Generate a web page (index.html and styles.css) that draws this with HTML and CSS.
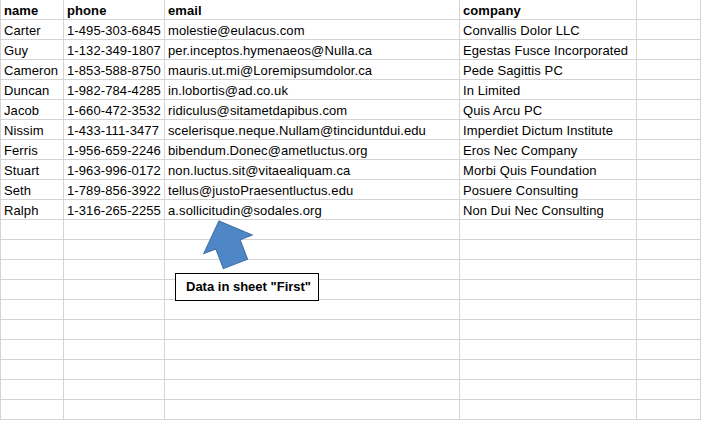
FILE: index.html
```html
<!DOCTYPE html>
<html>
<head>
    <title>Sheet First</title>
    <link rel="stylesheet" href="styles.css">
</head>
<body>
    <div id="hoja">
        <div class="grid">
            <div class="cell head first">name</div><div class="cell head">phone</div><div class="cell head">email</div><div class="cell head">company</div><div class="cell"></div>
            <div class="cell first">Carter</div><div class="cell">1-495-303-6845</div><div class="cell">molestie@eulacus.com</div><div class="cell">Convallis Dolor LLC</div><div class="cell"></div>
            <div class="cell first">Guy</div><div class="cell">1-132-349-1807</div><div class="cell">per.inceptos.hymenaeos@Nulla.ca</div><div class="cell">Egestas Fusce Incorporated</div><div class="cell"></div>
            <div class="cell first">Cameron</div><div class="cell">1-853-588-8750</div><div class="cell">mauris.ut.mi@Loremipsumdolor.ca</div><div class="cell">Pede Sagittis PC</div><div class="cell"></div>
            <div class="cell first">Duncan</div><div class="cell">1-982-784-4285</div><div class="cell">in.lobortis@ad.co.uk</div><div class="cell">In Limited</div><div class="cell"></div>
            <div class="cell first">Jacob</div><div class="cell">1-660-472-3532</div><div class="cell">ridiculus@sitametdapibus.com</div><div class="cell">Quis Arcu PC</div><div class="cell"></div>
            <div class="cell first">Nissim</div><div class="cell">1-433-111-3477</div><div class="cell">scelerisque.neque.Nullam@tinciduntdui.edu</div><div class="cell">Imperdiet Dictum Institute</div><div class="cell"></div>
            <div class="cell first">Ferris</div><div class="cell">1-956-659-2246</div><div class="cell">bibendum.Donec@ametluctus.org</div><div class="cell">Eros Nec Company</div><div class="cell"></div>
            <div class="cell first">Stuart</div><div class="cell">1-963-996-0172</div><div class="cell">non.luctus.sit@vitaealiquam.ca</div><div class="cell">Morbi Quis Foundation</div><div class="cell"></div>
            <div class="cell first">Seth</div><div class="cell">1-789-856-3922</div><div class="cell">tellus@justoPraesentluctus.edu</div><div class="cell">Posuere Consulting</div><div class="cell"></div>
            <div class="cell first">Ralph</div><div class="cell">1-316-265-2255</div><div class="cell">a.sollicitudin@sodales.org</div><div class="cell">Non Dui Nec Consulting</div><div class="cell"></div>
            <div class="cell first"></div><div class="cell"></div><div class="cell"></div><div class="cell"></div><div class="cell"></div>
            <div class="cell first"></div><div class="cell"></div><div class="cell"></div><div class="cell"></div><div class="cell"></div>
            <div class="cell first"></div><div class="cell"></div><div class="cell"></div><div class="cell"></div><div class="cell"></div>
            <div class="cell first"></div><div class="cell"></div><div class="cell"></div><div class="cell"></div><div class="cell"></div>
            <div class="cell first"></div><div class="cell"></div><div class="cell"></div><div class="cell"></div><div class="cell"></div>
            <div class="cell first"></div><div class="cell"></div><div class="cell"></div><div class="cell"></div><div class="cell"></div>
            <div class="cell first"></div><div class="cell"></div><div class="cell"></div><div class="cell"></div><div class="cell"></div>
            <div class="cell first"></div><div class="cell"></div><div class="cell"></div><div class="cell"></div><div class="cell"></div>
            <div class="cell first"></div><div class="cell"></div><div class="cell"></div><div class="cell"></div><div class="cell"></div>
            <div class="cell first"></div><div class="cell"></div><div class="cell"></div><div class="cell"></div><div class="cell"></div>
        </div>

        <!-- flecha y nota encima de la hoja -->
        <svg class="flecha" width="70" height="60" viewBox="0 0 70 60">
            <g transform="translate(17 1) rotate(-21)">
                <polygon points="0,0 26,25 13,25 13,46 -13,46 -13,25 -26,25" fill="#4f86c6" stroke="#3d6fa6" stroke-width="1"/>
            </g>
        </svg>
        <div class="nota">Data in sheet "First"</div>
    </div>
</body>
</html>
```

FILE: styles.css
```css
body {
    margin: 0;
    background-color: #ffffff;
    font-family: 'Liberation Sans', Arial, sans-serif;
    font-size: 13px;
    color: #000000;
    overflow: hidden;
}
#hoja {
    position: relative;
    width: 701px;
    height: 421px;
    overflow: hidden;
}
.grid {
    display: grid;
    grid-template-columns: 64px 101px 295px 177px 1fr;
    grid-auto-rows: 20px;
}
.cell {
    box-sizing: border-box;
    border-right: 1px solid #d4d4d4;
    border-bottom: 1px solid #d4d4d4;
    padding: 1px 0 0 3px;
    line-height: 20px;
    letter-spacing: 0.1px;
    white-space: nowrap;
    overflow: hidden;
}
.cell.first {
    border-left: 1px solid #d4d4d4;
}
.head {
    font-weight: bold;
}
.flecha {
    position: absolute;
    left: 202px;
    top: 220px;
}
.nota {
    position: absolute;
    left: 175px;
    top: 273px;
    width: 144px;
    height: 28px;
    box-sizing: border-box;
    border: 1px solid #000000;
    background-color: #ffffff;
    font-weight: bold;
    line-height: 26px;
    padding-left: 10px;
}
```
